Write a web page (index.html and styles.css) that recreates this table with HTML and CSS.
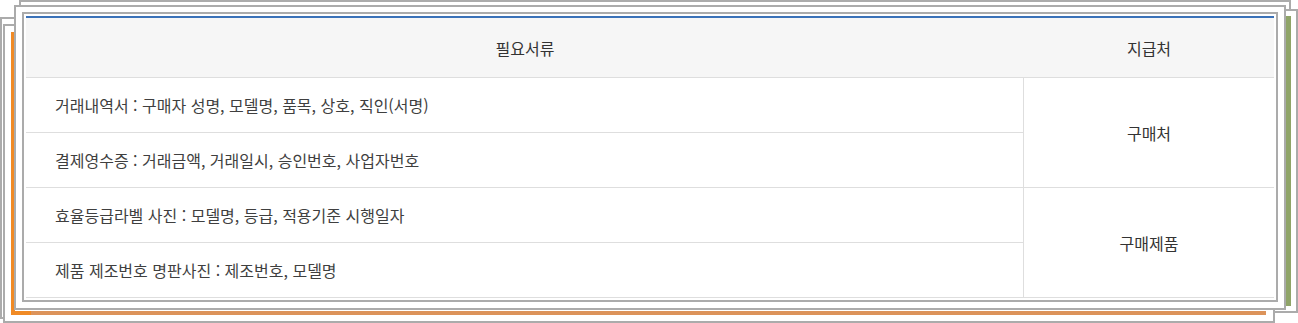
FILE: index.html
```html
<!DOCTYPE html>
<html lang="ko">
<head>
<meta charset="utf-8">
<title>필요서류</title>
<link rel="stylesheet" href="styles.css">
</head>
<body>
<div class="stage">
  <div class="sheet sheet-f4"></div>
  <div class="sheet sheet-f1"></div>
  <div class="sheet sheet-f5"></div>
  <div class="sheet sheet-f2"></div>
  <div class="accent-orange"></div>
  <div class="accent-green"></div>
  <div class="sheet sheet-f3"></div>
  <div class="card">
    <div class="doc-table">
      <div class="th">필요서류</div>
      <div class="th">지급처</div>
      <div class="td td-doc">거래내역서 : 구매자 성명, 모델명, 품목, 상호, 직인(서명)</div>
      <div class="td td-place span2">구매처</div>
      <div class="td td-doc">결제영수증 : 거래금액, 거래일시, 승인번호, 사업자번호</div>
      <div class="td td-doc">효율등급라벨 사진 : 모델명, 등급, 적용기준 시행일자</div>
      <div class="td td-place span2">구매제품</div>
      <div class="td td-doc">제품 제조번호 명판사진 : 제조번호, 모델명</div>
    </div>
  </div>
</div>
</body>
</html>
```

FILE: styles.css
```css
* { box-sizing: border-box; }
html, body { margin: 0; padding: 0; background: #fff; }
body {
  font-family: "Noto Sans CJK KR", "Noto Sans", sans-serif;
  color: #3f3f3f;
}
.stage {
  position: relative;
  width: 1298px;
  height: 323px;
  padding: 12px 0 0 22px;
  overflow: hidden;
}
.sheet {
  position: absolute;
  background: #fff;
  border: 2px solid #ababab;
}
.sheet-f4 { left: 19px; top: 0; width: 1272px; height: 300px; }
.sheet-f1 { left: 0; top: 17px; width: 1260px; height: 302px; }
.sheet-f5 { left: 20px; top: 9px; width: 1278px; height: 304px; }
.sheet-f2 { left: 3px; top: 24px; width: 1272px; height: 299px; }
.sheet-f3 { left: 14px; top: 5px; width: 1272px; height: 305px; }
.accent-orange {
  position: absolute;
  left: 11px;
  top: 32px;
  width: 1255px;
  height: 283px;
  border-left: 4px solid #f08a25;
  border-bottom: 4px solid #dc935a;
}
.accent-orange::after {
  content: "";
  position: absolute;
  left: -4px;
  bottom: -4px;
  width: 20px;
  height: 4px;
  background: #f08a25;
}
.accent-green {
  position: absolute;
  left: 1286px;
  top: 16px;
  width: 5px;
  height: 290px;
  background: #8fa468;
}
.card {
  position: relative;
  width: 1256px;
  height: 290px;
  background: #fff;
  border: 2px solid #ababab;
  padding: 2px;
}
.doc-table {
  display: grid;
  grid-template-columns: 998px 250px;
  grid-template-rows: 60px 55px 55px 55px 55px;
  border-top: 2px solid #3b72b8;
  font-size: 16px;
}
.th {
  background: #f6f6f6;
  border-bottom: 1px solid #dedede;
  display: flex;
  align-items: center;
  justify-content: center;
  color: #333;
}
.td {
  border-bottom: 1px solid #dedede;
  display: flex;
  align-items: center;
}
.td-doc {
  grid-column: 1;
  padding-left: 29px;
  border-right: 1px solid #dedede;
}
.td-place {
  grid-column: 2;
  justify-content: center;
  color: #333;
}
.span2 { grid-row: span 2; }
```
